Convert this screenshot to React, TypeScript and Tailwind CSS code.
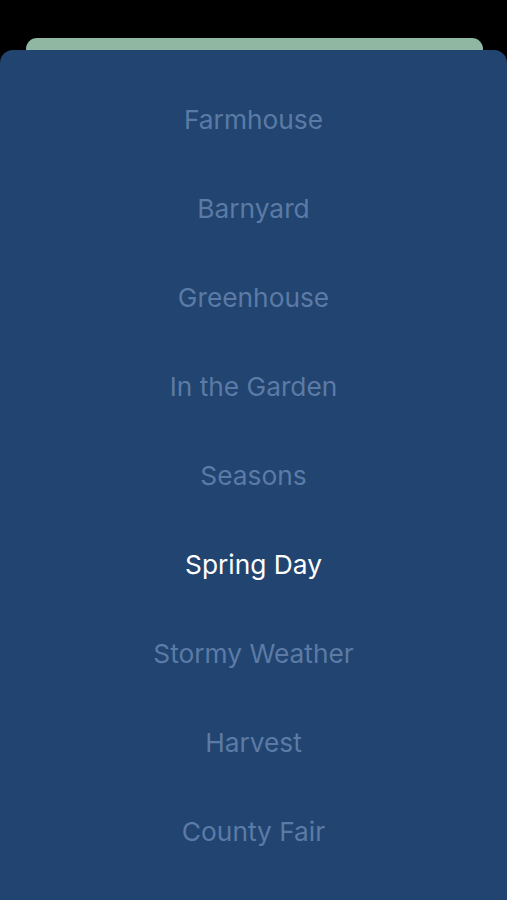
const items = [
  'Farmhouse',
  'Barnyard',
  'Greenhouse',
  'In the Garden',
  'Seasons',
  'Spring Day',
  'Stormy Weather',
  'Harvest',
  'County Fair',
];

const selected = 'Spring Day';

export default function App() {
  return (
    <div className="w-[507px] h-[900px] bg-black overflow-hidden flex flex-col pt-[38px]" style={{ fontFamily: 'Inter, "Noto Sans", sans-serif' }}>
      <div className="ml-[26px] mr-[24px] h-[14px] bg-[#8fb7a2] rounded-t-[11px] -mb-[2px]" />
      <div className="flex-1 bg-[#224470] rounded-t-[13px] pt-[25px]">
        <ul className="flex flex-col">
          {items.map((item) => (
            <li
              key={item}
              className={`h-[89px] flex items-center justify-center text-[26.3px] ${
                item === selected ? 'text-white' : 'text-[#5b7ba6]'
              }`}
            >
              {item}
            </li>
          ))}
        </ul>
      </div>
    </div>
  );
}
